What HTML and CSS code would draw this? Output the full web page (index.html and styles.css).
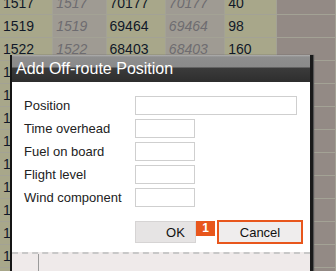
FILE: index.html
```html
<!DOCTYPE html>
<html lang="en">
<head>
    <meta charset="UTF-8">
    <title>Add Off-route Position</title>
    <link rel="stylesheet" href="styles.css">
</head>
<body>
    <div class="screen">
        <table class="grid">
            <tr><td>1517</td><td class="alt">1517</td><td>70177</td><td class="alt">70177</td><td>40</td><td class="rest"></td></tr>
            <tr><td>1519</td><td class="alt">1519</td><td>69464</td><td class="alt">69464</td><td>98</td><td class="rest"></td></tr>
            <tr><td>1522</td><td class="alt">1522</td><td>68403</td><td class="alt">68403</td><td>160</td><td class="rest"></td></tr>
            <tr><td>1524</td><td class="alt">1524</td><td>67850</td><td class="alt">67850</td><td>210</td><td class="rest"></td></tr>
            <tr><td>1527</td><td class="alt">1527</td><td>66912</td><td class="alt">66912</td><td>250</td><td class="rest"></td></tr>
            <tr><td>1529</td><td class="alt">1529</td><td>66020</td><td class="alt">66020</td><td>290</td><td class="rest"></td></tr>
            <tr><td>1532</td><td class="alt">1532</td><td>65117</td><td class="alt">65117</td><td>320</td><td class="rest"></td></tr>
            <tr><td>1534</td><td class="alt">1534</td><td>64305</td><td class="alt">64305</td><td>350</td><td class="rest"></td></tr>
            <tr><td>1537</td><td class="alt">1537</td><td>63480</td><td class="alt">63480</td><td>370</td><td class="rest"></td></tr>
            <tr><td>1539</td><td class="alt">1539</td><td>62611</td><td class="alt">62611</td><td>370</td><td class="rest"></td></tr>
            <tr><td>1542</td><td class="alt">1542</td><td>61790</td><td class="alt">61790</td><td>370</td><td class="rest"></td></tr>
            <tr><td>1544</td><td class="alt">1544</td><td>60944</td><td class="alt">60944</td><td>370</td><td class="rest"></td></tr>
            <tr><td>1547</td><td class="alt">1547</td><td>60102</td><td class="alt">60102</td><td>370</td><td class="rest"></td></tr>
        </table>

        <div class="dialog">
            <div class="dialog-title">Add Off-route Position</div>
            <div class="dialog-body">
                <div class="form-row">
                    <label for="position">Position</label>
                    <input type="text" id="position" class="wide">
                </div>
                <div class="form-row">
                    <label for="timeOverhead">Time overhead</label>
                    <input type="text" id="timeOverhead">
                </div>
                <div class="form-row">
                    <label for="fuel">Fuel on board</label>
                    <input type="text" id="fuel">
                </div>
                <div class="form-row">
                    <label for="level">Flight level</label>
                    <input type="text" id="level">
                </div>
                <div class="form-row">
                    <label for="wind">Wind component</label>
                    <input type="text" id="wind">
                </div>
                <div class="buttons">
                    <button class="btn ok">OK</button>
                    <span class="badge">1</span>
                    <button class="btn cancel">Cancel</button>
                </div>
            </div>
            <div class="dialog-footer">
                <div class="footer-cell first"></div>
                <div class="footer-cell"></div>
            </div>
        </div>
    </div>
</body>
</html>
```

FILE: styles.css
```css
body {
    margin: 0;
    font-family: "Liberation Sans", Arial, sans-serif;
    background-color: #938a85;
}

.screen {
    position: relative;
    width: 336px;
    height: 271px;
    overflow: hidden;
    background-color: #938a85;
}

.grid {
    border-collapse: separate;
    border-spacing: 1px 1px;
    margin-top: -9px;
    margin-left: -1px;
    background-color: #a3a295;
    font-size: 14px;
}

.grid td {
    height: 22px;
    padding: 0 0 0 3px;
    background-color: #a8a78a;
    color: #101828;
    box-sizing: border-box;
}

.grid td:nth-child(1) { width: 53px; }
.grid td:nth-child(2) { width: 53px; }
.grid td:nth-child(3) { width: 59px; }
.grid td:nth-child(4) { width: 59px; }
.grid td:nth-child(5) { width: 52px; }
.grid td:nth-child(6) { width: 60px; }

.grid td.alt {
    background-color: #9f9b93;
    color: #6e6c70;
    font-style: italic;
}

.grid td.rest {
    background-color: #938a85;
}

/* dialog over the table */
.dialog {
    position: absolute;
    left: 10px;
    top: 55px;
    width: 298px;
    height: 230px;
    border-left: 2px solid #151515;
    background: white;
    box-shadow: 3px 0 0 #1a1a1a, 4px 0 1px #555;
}

.dialog-title {
    height: 27px;
    line-height: 27px;
    padding-left: 4px;
    color: white;
    font-size: 16px;
    background: linear-gradient(#b0b0b0 0, #8e8e8e 2px, #8a8a8a 12px, #3b3b3b 13px, #2e2e2e 27px);
}

.dialog-body {
    height: 170px;
    padding: 12px 0 0 12px;
    box-sizing: border-box;
}

.form-row {
    display: flex;
    align-items: center;
    height: 23px;
}

.form-row label {
    width: 111px;
    font-size: 13px;
    color: #222;
}

.form-row input {
    width: 60px;
    height: 19px;
    margin: 0;
    padding: 0;
    border: 1px solid #cfcfcf;
    box-sizing: border-box;
}

.form-row input.wide {
    width: 162px;
}

.buttons {
    display: flex;
    align-items: flex-start;
    margin-top: 12px;
    margin-left: 111px;
}

.btn {
    height: 22px;
    font-family: "Liberation Sans", Arial, sans-serif;
    font-size: 13px;
    color: #111;
    background-color: #e6e4e4;
    border: 1px solid #d6d4d4;
    padding: 0;
}

.ok {
    width: 61px;
    padding-left: 20px;
    text-align: center;
}

.badge {
    width: 19px;
    height: 15px;
    line-height: 15px;
    text-align: center;
    font-size: 12px;
    font-weight: bold;
    color: white;
    background-color: #e8561c;
}

.cancel {
    width: 86px;
    height: 24px;
    margin-top: -1px;
    margin-left: 2px;
    border: 2px solid #e8561c;
    background-color: #efeded;
}

.dialog-footer {
    display: flex;
    height: 40px;
    border-top: 2px dashed #c8c8c8;
    background-color: #efeaea;
}

.footer-cell.first {
    width: 26px;
    border-right: 1px solid #9a9a9a;
}
```
